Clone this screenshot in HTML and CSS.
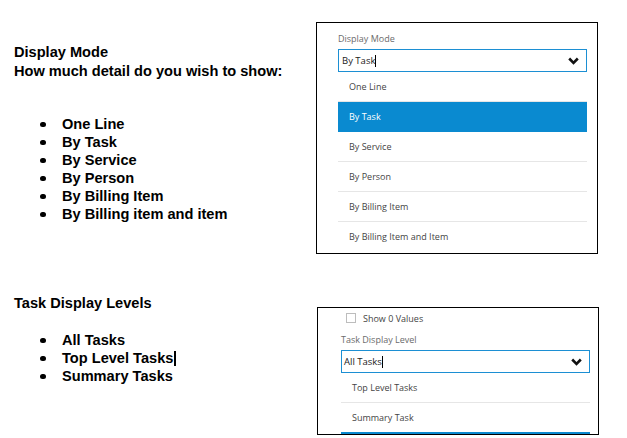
FILE: index.html
```html
<!DOCTYPE html>
<html>
<head>
<meta charset="utf-8">
<link rel="stylesheet" href="styles.css">
</head>
<body>
<div class="page">
  <section class="row row-top">
    <div class="doc doc-top">
      <p class="doc-title">Display Mode</p>
      <p class="doc-title">How much detail do you wish to show:</p>
      <ul class="bullets bullets-top">
        <li>One Line</li>
        <li>By Task</li>
        <li>By Service</li>
        <li>By Person</li>
        <li>By Billing Item</li>
        <li>By Billing item and item</li>
      </ul>
    </div>
    <div class="panel panel-top">
      <div class="field-label">Display Mode</div>
      <div class="select"><span class="select-value">By Task<span class="caret"></span></span>
        <svg class="chev" width="11" height="8" viewBox="0 0 11 8"><path d="M1.2 1.5 L5.5 5.8 L9.8 1.5" fill="none" stroke="#111" stroke-width="2.6"/></svg>
      </div>
      <div class="options">
        <div class="opt">One Line</div>
        <div class="opt opt-active">By Task</div>
        <div class="opt">By Service</div>
        <div class="opt">By Person</div>
        <div class="opt">By Billing Item</div>
        <div class="opt opt-last">By Billing Item and Item</div>
      </div>
    </div>
  </section>
  <section class="row row-bottom">
    <div class="doc doc-bottom">
      <p class="doc-title">Task Display Levels</p>
      <ul class="bullets bullets-bottom">
        <li>All Tasks</li>
        <li>Top Level Tasks<span class="doc-caret"></span></li>
        <li>Summary Tasks</li>
      </ul>
    </div>
    <div class="panel panel-bottom">
      <div class="check-row"><span class="checkbox"></span><span>Show 0 Values</span></div>
      <div class="field-label field-label-b">Task Display Level</div>
      <div class="select select-b"><span class="select-value">All Tasks<span class="caret"></span></span>
        <svg class="chev" width="11" height="8" viewBox="0 0 11 8"><path d="M1.2 1.5 L5.5 5.8 L9.8 1.5" fill="none" stroke="#111" stroke-width="2.6"/></svg>
      </div>
      <div class="options options-b">
        <div class="opt">Top Level Tasks</div>
        <div class="opt">Summary Task</div>
        <div class="opt opt-cut"></div>
      </div>
    </div>
  </section>
</div>
</body>
</html>
```
FILE: styles.css
```css
* { box-sizing: border-box; }
html, body { margin: 0; padding: 0; background: #fff; }
body { width: 627px; height: 438px; overflow: hidden; }
.page { padding-top: 22px; }
.row { display: flex; }
.doc { width: 316px; padding-left: 14px; font-family: "Liberation Sans", Arial, sans-serif; font-weight: bold; font-size: 14.6px; color: #000; }
.doc-top { padding-top: 21px; }
.doc-title { margin: 0; line-height: 19px; }
.bullets { list-style: none; margin: 0; padding: 0; }
.bullets li { display: flex; align-items: center; line-height: 18px; }
.bullets li::before { content: ""; width: 5.5px; height: 5.5px; border-radius: 50%; background: #000; margin-left: 26px; margin-right: 16.5px; margin-top: 1px; }
.bullets-top { margin-top: 34px; }
.bullets-bottom { margin-top: 18px; }
.doc-bottom { margin-top: -13px; }
.doc-caret { display: inline-block; width: 2px; height: 15px; background: #000; margin-left: 1px; }

.panel { border: 1px solid #000; font-family: "Open Sans", "Noto Sans", sans-serif; font-size: 9px; color: #333; background: #fff; }
.panel-top { width: 282px; height: 232px; padding: 9px 10px 0 21px; }
.field-label { color: #6b6b6b; line-height: 14px; height: 17px; }
.select { height: 23px; border: 1px solid #1c8fd3; display: flex; align-items: center; justify-content: space-between; padding: 0 7px 0 3px; color: #222; font-size: 9.5px; }
.select-value { display: inline-flex; align-items: center; }
.caret { display: inline-block; width: 1px; height: 12px; background: #000; }
.chev { display: block; }
.opt { height: 30px; line-height: 30px; padding-left: 11px; border-bottom: 1px solid #e6e6e6; color: #444; }
.opt-active { background: #0a8ad0; color: #fff; border-bottom-color: #0a8ad0; }
.opt-last { border-bottom: none; }

.row-bottom { margin-top: 53px; }
.panel-bottom { width: 282px; height: 128px; padding: 4px 8px 0 23px; margin-left: 1px; overflow: hidden; }
.check-row { display: flex; align-items: center; height: 12px; padding-left: 5px; color: #444; }
.checkbox { width: 10px; height: 10px; border: 1px solid #bdbdbd; margin-right: 7px; background: #fff; }
.field-label-b { margin-top: 9px; height: 17px; }
.select-b { padding-left: 2px; }
.options-b .opt { padding-left: 11px; }
.opt-cut { border-bottom: none; border-top: 2px solid #0a8ad0; margin-top: -1px; }
```
